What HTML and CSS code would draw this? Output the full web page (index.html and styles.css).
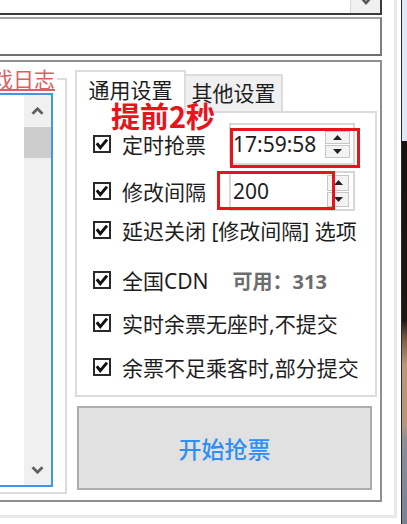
FILE: index.html
```html
<!DOCTYPE html>
<html lang="zh-CN">
<head>
<meta charset="utf-8">
<title>抢票设置</title>
<link rel="stylesheet" href="styles.css">
</head>
<body>
<div class="screen">
  <div class="window">
    <div class="frame">
      <div class="content">
        <div class="combo">
          <div class="combo-btn">
            <svg class="combo-arrow" width="12" height="10" viewBox="0 0 12 10"><polyline points="1.5,2 6,7 10.5,2" fill="none" stroke="#555" stroke-width="2.6"/></svg>
          </div>
        </div>
        <div class="textbox"></div>
        <div class="group">
          <fieldset class="log-box">
            <legend class="log-title">游戏日志</legend>
            <div class="listbox">
              <div class="list-items"></div>
              <div class="scrollbar">
                <div class="sb-btn sb-up">
                  <svg width="13" height="8" viewBox="0 0 13 8"><polyline points="1.5,6.8 6.5,1.8 11.5,6.8" fill="none" stroke="#606060" stroke-width="2.8"/></svg>
                </div>
                <div class="sb-thumb"></div>
                <div class="sb-track"></div>
                <div class="sb-btn sb-down">
                  <svg width="13" height="8" viewBox="0 0 13 8"><polyline points="1.5,1.2 6.5,6.2 11.5,1.2" fill="none" stroke="#606060" stroke-width="2.8"/></svg>
                </div>
              </div>
            </div>
          </fieldset>
          <div class="settings">
            <div class="tabs">
              <div class="tab tab-active">通用设置</div>
              <div class="tab">其他设置</div>
            </div>
            <div class="tab-panel">
              <div class="opt opt-time">
                <svg class="cb" width="18" height="18" viewBox="0 0 18 18"><rect x="1" y="1" width="16" height="16" fill="#fff" stroke="#2a2a2a" stroke-width="2"/><polyline points="3.8,8.2 7.3,12.6 14,4.6" fill="none" stroke="#111" stroke-width="3"/></svg>
                <span class="opt-label">定时抢票</span>
                <div class="spin spin-time">
                  <span class="spin-value">17:59:58</span>
                  <div class="spin-btns">
                    <div class="spin-btn"><svg width="9" height="5" viewBox="0 0 9 5"><polygon points="0,5 4.5,0 9,5" fill="#222"/></svg></div>
                    <div class="spin-btn"><svg width="9" height="5" viewBox="0 0 9 5"><polygon points="0,0 9,0 4.5,5" fill="#222"/></svg></div>
                  </div>
                </div>
              </div>
              <div class="opt opt-interval">
                <svg class="cb" width="18" height="18" viewBox="0 0 18 18"><rect x="1" y="1" width="16" height="16" fill="#fff" stroke="#2a2a2a" stroke-width="2"/><polyline points="3.8,8.2 7.3,12.6 14,4.6" fill="none" stroke="#111" stroke-width="3"/></svg>
                <span class="opt-label">修改间隔</span>
                <div class="spin spin-interval">
                  <span class="spin-value">200</span>
                  <div class="spin-btns">
                    <div class="spin-btn"><svg width="9" height="5" viewBox="0 0 9 5"><polygon points="0,5 4.5,0 9,5" fill="#222"/></svg></div>
                    <div class="spin-btn"><svg width="9" height="5" viewBox="0 0 9 5"><polygon points="0,0 9,0 4.5,5" fill="#222"/></svg></div>
                  </div>
                </div>
              </div>
              <div class="opt opt-delay">
                <svg class="cb" width="18" height="18" viewBox="0 0 18 18"><rect x="1" y="1" width="16" height="16" fill="#fff" stroke="#2a2a2a" stroke-width="2"/><polyline points="3.8,8.2 7.3,12.6 14,4.6" fill="none" stroke="#111" stroke-width="3"/></svg>
                <span class="opt-label">延迟关闭 [修改间隔] 选项</span>
              </div>
              <div class="opt opt-cdn">
                <svg class="cb" width="18" height="18" viewBox="0 0 18 18"><rect x="1" y="1" width="16" height="16" fill="#fff" stroke="#2a2a2a" stroke-width="2"/><polyline points="3.8,8.2 7.3,12.6 14,4.6" fill="none" stroke="#111" stroke-width="3"/></svg>
                <span class="opt-label">全国CDN</span>
                <span class="avail">可用：313</span>
              </div>
              <div class="opt opt-noseat">
                <svg class="cb" width="18" height="18" viewBox="0 0 18 18"><rect x="1" y="1" width="16" height="16" fill="#fff" stroke="#2a2a2a" stroke-width="2"/><polyline points="3.8,8.2 7.3,12.6 14,4.6" fill="none" stroke="#111" stroke-width="3"/></svg>
                <span class="opt-label">实时余票无座时,不提交</span>
              </div>
              <div class="opt opt-partial">
                <svg class="cb" width="18" height="18" viewBox="0 0 18 18"><rect x="1" y="1" width="16" height="16" fill="#fff" stroke="#2a2a2a" stroke-width="2"/><polyline points="3.8,8.2 7.3,12.6 14,4.6" fill="none" stroke="#111" stroke-width="3"/></svg>
                <span class="opt-label">余票不足乘客时,部分提交</span>
              </div>
            </div>
            <button class="start-btn" type="button">开始抢票</button>
          </div>
        </div>
      </div>
    </div>
    <div class="annot-text">提前2秒</div>
    <div class="annot-box annot-time"></div>
    <div class="annot-box annot-interval"></div>
  </div>
  <div class="desktop"></div>
</div>
</body>
</html>
```
FILE: styles.css
```css
html, body {
  margin: 0;
  padding: 0;
  background: #fff;
  overflow: hidden;
}

body {
  font-family: "Noto Sans", "Noto Sans CJK SC", sans-serif;
  color: #1e1e1e;
}

.screen {
  display: flex;
  width: 407px;
  height: 524px;
}

.window {
  position: relative;
  flex: none;
  width: 401px;
  height: 524px;
  background: #fff;
}

.desktop {
  flex: none;
  width: 6px;
  height: 524px;
  box-sizing: border-box;
  border-left: 1px solid #2b2b2b;
  background: linear-gradient(to bottom,
    #dde9f5 0, #dde9f5 141px,
    #17110d 141px, #1f1712 320px,
    #7a5f46 340px, #b79a78 365px, #b6987a 425px,
    #8d8f98 440px, #76839a 524px);
}

.frame {
  width: 397px;
  height: 518px;
  box-sizing: border-box;
  border-right: 3px solid #e9e9e9;
  border-bottom: 3px solid #e9e9e9;
  overflow: hidden;
}

.content {
  margin-left: -10px;
  width: 392px;
  display: flex;
  flex-direction: column;
}

/* top combo box (cut off) */
.combo {
  height: 15px;
  box-sizing: border-box;
  border: 2px solid #3a3a3a;
  border-top: 0;
  display: flex;
  justify-content: flex-end;
  background: #fff;
}

.combo-btn {
  width: 29px;
  height: 13px;
  background: #f0f0f0;
  border-left: 1px solid #d8d8d8;
  display: flex;
  justify-content: center;
  align-items: flex-start;
  overflow: hidden;
}

.combo-arrow {
  margin-top: -4px;
}

/* text box */
.textbox {
  margin-top: 2px;
  height: 39px;
  box-sizing: border-box;
  border: 2px solid #a3a3a3;
  border-right-color: #7d7d7d;
  border-bottom-color: #6f6f6f;
  background: #fff;
}

/* main group */
.group {
  margin-top: 4px;
  height: 442px;
  box-sizing: border-box;
  border: 2px solid #8f8f8f;
  display: flex;
  align-items: flex-start;
  background: #fff;
}

/* log box */
.log-box {
  flex: 0 0 105px;
  margin: 5px 0 0 -30px;
  height: 427px;
  box-sizing: border-box;
  border: 2px solid #dcdcdc;
  padding: 2px 12px 5px 5px;
  min-width: 0;
}

.log-title {
  padding: 0 2px;
  font-size: 21px;
  line-height: 24px;
  color: #de5f5f;
  text-decoration: underline;
  white-space: nowrap;
}

.listbox {
  height: 394px;
  box-sizing: border-box;
  border: 2px solid #4197e4;
  display: flex;
  background: #fff;
}

.list-items {
  flex: 1;
}

.scrollbar {
  width: 27px;
  display: flex;
  flex-direction: column;
  background: #f0f0f0;
}

.sb-btn {
  display: flex;
  justify-content: center;
  align-items: center;
}

.sb-up {
  height: 32px;
}

.sb-thumb {
  height: 31px;
  background: #cdcdcd;
}

.sb-track {
  flex: 1;
}

.sb-down {
  height: 30px;
}

/* settings column */
.settings {
  margin: 8px 0 0 8px;
  width: 302px;
  display: flex;
  flex-direction: column;
}

.tabs {
  display: flex;
  align-items: flex-end;
  height: 43px;
}

.tab {
  box-sizing: border-box;
  border: 2px solid #dcdcdc;
  border-bottom: 0;
  font-size: 21px;
  line-height: 1;
  display: flex;
  align-items: center;
  justify-content: center;
  width: 99px;
  height: 39px;
  margin-left: -2px;
  padding-bottom: 2px;
  background: #f0f0f0;
  color: #1e1e1e;
}

.tab-active {
  position: relative;
  z-index: 1;
  width: 111px;
  height: 43px;
  margin-left: 0;
  padding-bottom: 5px;
  background: #fff;
}

.tab-panel {
  margin-top: -2px;
  height: 286px;
  box-sizing: border-box;
  border: 2px solid #dcdcdc;
  padding: 10px 0 0 16px;
  display: flex;
  flex-direction: column;
  background: #fff;
}

.opt {
  display: flex;
  align-items: center;
  height: 36px;
  font-size: 21px;
  white-space: nowrap;
}

.cb {
  flex: none;
  margin-right: 11px;
}

.opt-time {
  height: 42px;
}

.opt-interval {
  height: 40px;
  margin-top: 6px;
}

.opt-delay {
  margin-top: 1px;
}

.opt-cdn {
  margin-top: 14px;
}

.opt-noseat {
  margin-top: 7px;
}

.opt-partial {
  margin-top: 8px;
}

.avail {
  margin-left: 24px;
  font-size: 20px;
  font-weight: bold;
  color: #6d6d6d;
}

.spin {
  margin-left: auto;
  margin-right: 20px;
  width: 126px;
  box-sizing: border-box;
  border: 2px solid #d7d7d7;
  padding-left: 2px;
  display: flex;
  align-items: center;
  background: #fff;
}

.spin-time {
  height: 42px;
}

.spin-interval {
  height: 40px;
}

.spin-value {
  flex: 1;
  font-size: 21px;
  color: #1e1e1e;
}

.spin-btns {
  display: flex;
  flex-direction: column;
}

.spin-time .spin-btns {
  width: 25px;
  height: 27px;
  margin-right: 3px;
}

.spin-interval .spin-btns {
  width: 22px;
  height: 32px;
  margin-right: 4px;
}

.spin-btn {
  flex: 1;
  box-sizing: border-box;
  border: 1px solid #c6c6c6;
  background: #f3f3f3;
  display: flex;
  justify-content: center;
  align-items: center;
}

.spin-btn + .spin-btn {
  margin-top: 1px;
}

.start-btn {
  margin: 9px 5px 0 2px;
  height: 84px;
  padding: 0;
  box-sizing: border-box;
  border: 2px solid #adadad;
  background: #e1e1e1;
  color: #2f8ff2;
  font-family: "Noto Sans CJK SC", sans-serif;
  font-size: 23px;
  font-weight: 500;
}

/* red annotations drawn over the screenshot */
.annot-text {
  position: absolute;
  z-index: 5;
  left: 111px;
  top: 101px;
  font-family: "Noto Sans CJK SC", sans-serif;
  font-size: 29px;
  line-height: 1;
  font-weight: bold;
  color: #e8141c;
  white-space: nowrap;
}

.annot-box {
  position: absolute;
  z-index: 5;
  box-sizing: border-box;
  border: 3px solid #e8141c;
}

.annot-time {
  left: 230px;
  top: 128px;
  width: 130px;
  height: 40px;
}

.annot-interval {
  left: 217px;
  top: 171px;
  width: 118px;
  height: 39px;
}
```
